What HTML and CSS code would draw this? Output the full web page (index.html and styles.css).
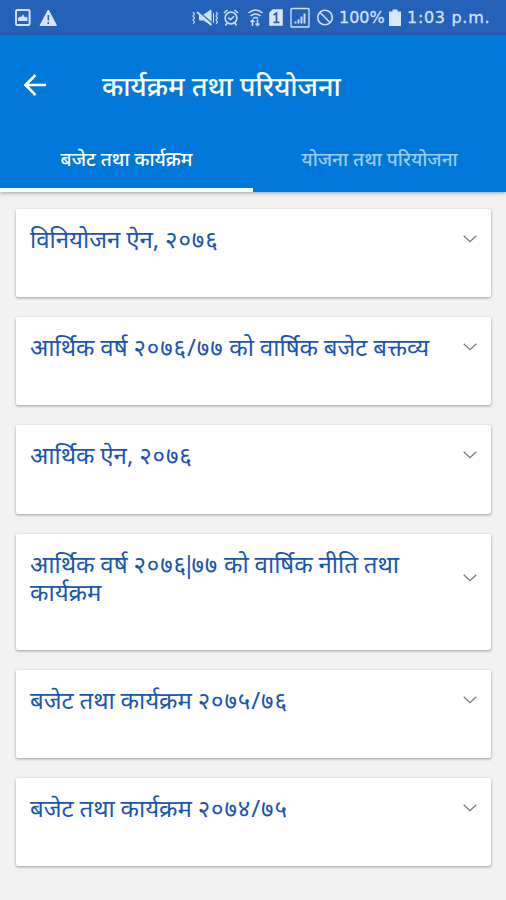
FILE: index.html
```
<!DOCTYPE html>
<html lang="ne">
<head>
<meta charset="utf-8">
<meta name="viewport" content="width=device-width">
<title>कार्यक्रम तथा परियोजना</title>
<link rel="stylesheet" href="styles.css">
</head>
<body>
<div class="status">
  <svg class="status-icons-left" width="44" height="18" viewBox="14 8 44 18" fill="none">
    <rect x="16" y="9" width="13.6" height="15" rx="1.5" stroke="#d3e0fa" stroke-width="2"/>
    <path d="M18 20v-3l2-1.500 1 .5 2-2.500 2 3 1.500-1 1 1.500v3z" fill="#d3e0fa"/>
    <path d="M48.300 9 56.500 24.500h-16.500z" fill="#dce6fb" stroke="#dce6fb" stroke-linejoin="round"/>
    <path d="M48.300 14v5.500M48.300 21v2" stroke="#2861b8" stroke-width="1.600"/>
  </svg>
  <div class="status-right">
    <svg width="144" height="22" viewBox="190 6 144 22" fill="none" stroke="#cfddf8" stroke-width="1.600">
      <path d="M193 11l1.500 2-1.500 2 1.500 2-1.500 2 1.500 2-1.500 2M216 11l1.500 2-1.500 2 1.500 2-1.500 2 1.500 2-1.500 2" stroke-width="1.200"/>
      <path d="M199.500 14h4l7.500-5v15l-7.500-5h-4zM213.500 12v10" fill="#cfddf8" stroke-width="1"/>
      <path d="M197.500 9.500l15 13" stroke="#2861b8" stroke-width="1.200"/>
      <path d="M197 11l14.500 13" stroke-width="1.800"/>
      <circle cx="231" cy="17" r="5.900"/>
      <path d="M224 12l3.500-3M238 12l-3.500-3M228.300 16.500l2.200 2.200 3.500-3.500M227 22l-1.500 2.500M235 22l1.500 2.500"/>
      <path d="M248.500 12q7-6 14 0M250.500 15q5-4 10 0M253 17.500q2.500-2 5 0"/>
      <path d="M252.500 25v-6m-2 2 2-2 2 2M257.500 18.500v6m-2-2 2 2 2-2" stroke-width="1.500"/>
      <path d="M273 9h9v15h-12V12z" fill="#dce6fb" stroke="#dce6fb"/>
      <path d="M273.500 14l3-1.800V21M273.500 21.300h6" stroke="#2861b8" stroke-width="1.800"/>
      <rect x="291" y="7.500" width="18" height="18.500" rx=".8" stroke-width="1.400"/>
      <path d="M295.500 22.500v-2M298.500 22.500v-4M301.500 22.500v-7M304.500 22.500v-10" stroke-width="1.900"/>
      <circle cx="325" cy="16.500" r="7.300"/>
      <path d="M319.800 11.300l10.400 10.400"/>
    </svg>
    <span class="battery-text">100%</span>
    <svg class="battery" width="12" height="18" viewBox="0 0 12 18"><path d="M3.500.500h5v2H12V17H0V2.500h3.500z" fill="#dce6fb"/></svg>
    <span class="clock">1:03 p.m.</span>
  </div>
</div>
<header class="appbar">
  <div class="toolbar">
    <svg class="back" width="24" height="24" viewBox="0 0 24 24" fill="none" stroke="#fff" stroke-width="2.700"><path d="M23 12H2.500M12.500 2 2.500 12l10 10"/></svg>
    <h1>कार्यक्रम तथा परियोजना</h1>
  </div>
  <nav class="tabs">
    <a class="tab active">बजेट तथा कार्यक्रम</a>
    <a class="tab">योजना तथा परियोजना</a>
  </nav>
</header>
<main class="list">
  <article class="card"><h2>विनियोजन ऐन, <span class="num">२०७६</span></h2><svg class="chevron" viewBox="0 0 14 8"><path d="M.7.700 7 6.700 13.300.700"/></svg></article>
  <article class="card"><h2>आर्थिक वर्ष <span class="num">२०७६/७७</span> को वार्षिक बजेट बक्तव्य</h2><svg class="chevron" viewBox="0 0 14 8"><path d="M.7.700 7 6.700 13.300.700"/></svg></article>
  <article class="card"><h2>आर्थिक ऐन, <span class="num">२०७६</span></h2><svg class="chevron" viewBox="0 0 14 8"><path d="M.7.700 7 6.700 13.300.700"/></svg></article>
  <article class="card tall"><h2><span class="line">आर्थिक वर्ष <span class="num">२०७६<span class="bar">|</span>७७</span> को वार्षिक नीति तथा</span> <span class="line">कार्यक्रम</span></h2><svg class="chevron" viewBox="0 0 14 8"><path d="M.7.700 7 6.700 13.300.700"/></svg></article>
  <article class="card"><h2>बजेट तथा कार्यक्रम <span class="num" lang="hi">२०७५/७६</span></h2><svg class="chevron" viewBox="0 0 14 8"><path d="M.7.700 7 6.700 13.300.700"/></svg></article>
  <article class="card"><h2>बजेट तथा कार्यक्रम <span class="num" lang="hi">२०७४/७५</span></h2><svg class="chevron" viewBox="0 0 14 8"><path d="M.7.700 7 6.700 13.300.700"/></svg></article>
</main>
</body>
</html>
```
FILE: styles.css
```
* { box-sizing: border-box; }
body {
  margin: 0;
  height: 900px;
  overflow: hidden;
  background: #f2f2f2;
  font-family: "Noto Sans", sans-serif;
}
svg { display: block; flex: none; }
.status {
  height: 35px;
  padding: 0 15px 0 14px;
  display: flex;
  align-items: center;
  justify-content: space-between;
  background: #2461b9;
  color: #d3e0fa;
  font: 16px/34px "DejaVu Sans", sans-serif;
}
.status-right { display: flex; align-items: center; height: 34px; white-space: nowrap; }
.battery-text { width: 50px; padding-left: 5px; -webkit-text-stroke: .3px; }
.battery { margin-left: 5px; }
.clock { width: 84px; margin-left: 6px; letter-spacing: .7px; -webkit-text-stroke: .3px; }
.appbar {
  height: 157px;
  background: #0078d9;
  box-shadow: 0 1px 4px rgba(0, 0, 0, .35);
  color: #fff;
}
.toolbar {
  height: 100px;
  padding-left: 23px;
  display: flex;
  align-items: center;
}
.toolbar h1 {
  margin: 2px 0 0 55px;
  font-size: 27.1px;
  font-weight: 500;
  line-height: 40px;
}
.tabs { display: flex; height: 57px; }
.tab {
  flex: 1;
  border-bottom: 4px solid transparent;
  color: #9ccbf2;
  font-size: 19px;
  font-weight: 500;
  line-height: 48px;
  text-align: center;
}
.tab.active { color: #fff; border-color: #fafafa; }
.list {
  display: flex;
  flex-direction: column;
  gap: 20px;
  padding: 17px 15px 0 16px;
}
.card {
  height: 88.2px;
  padding: 16px 14px 0;
  display: flex;
  align-items: flex-start;
  justify-content: space-between;
  background: #fff;
  border-radius: 2px;
  box-shadow: 0 1px 3px rgba(0, 0, 0, .36);
}
.card.tall { height: 116.5px; }
.card h2 {
  margin: 0;
  color: #1b55af;
  font-size: 24px;
  font-weight: 400;
  line-height: 28px;
  white-space: nowrap;
  word-spacing: -.4px;
}
.line { display: block; }
.num { letter-spacing: .9px; }
.bar { margin: 0 -4.8px; }
.chevron {
  width: 14px;
  height: 8px;
  margin-top: 10px;
  fill: none;
  stroke: #777;
  stroke-width: 1.2;
}
.tall .chevron { margin-top: 24px; }
```
